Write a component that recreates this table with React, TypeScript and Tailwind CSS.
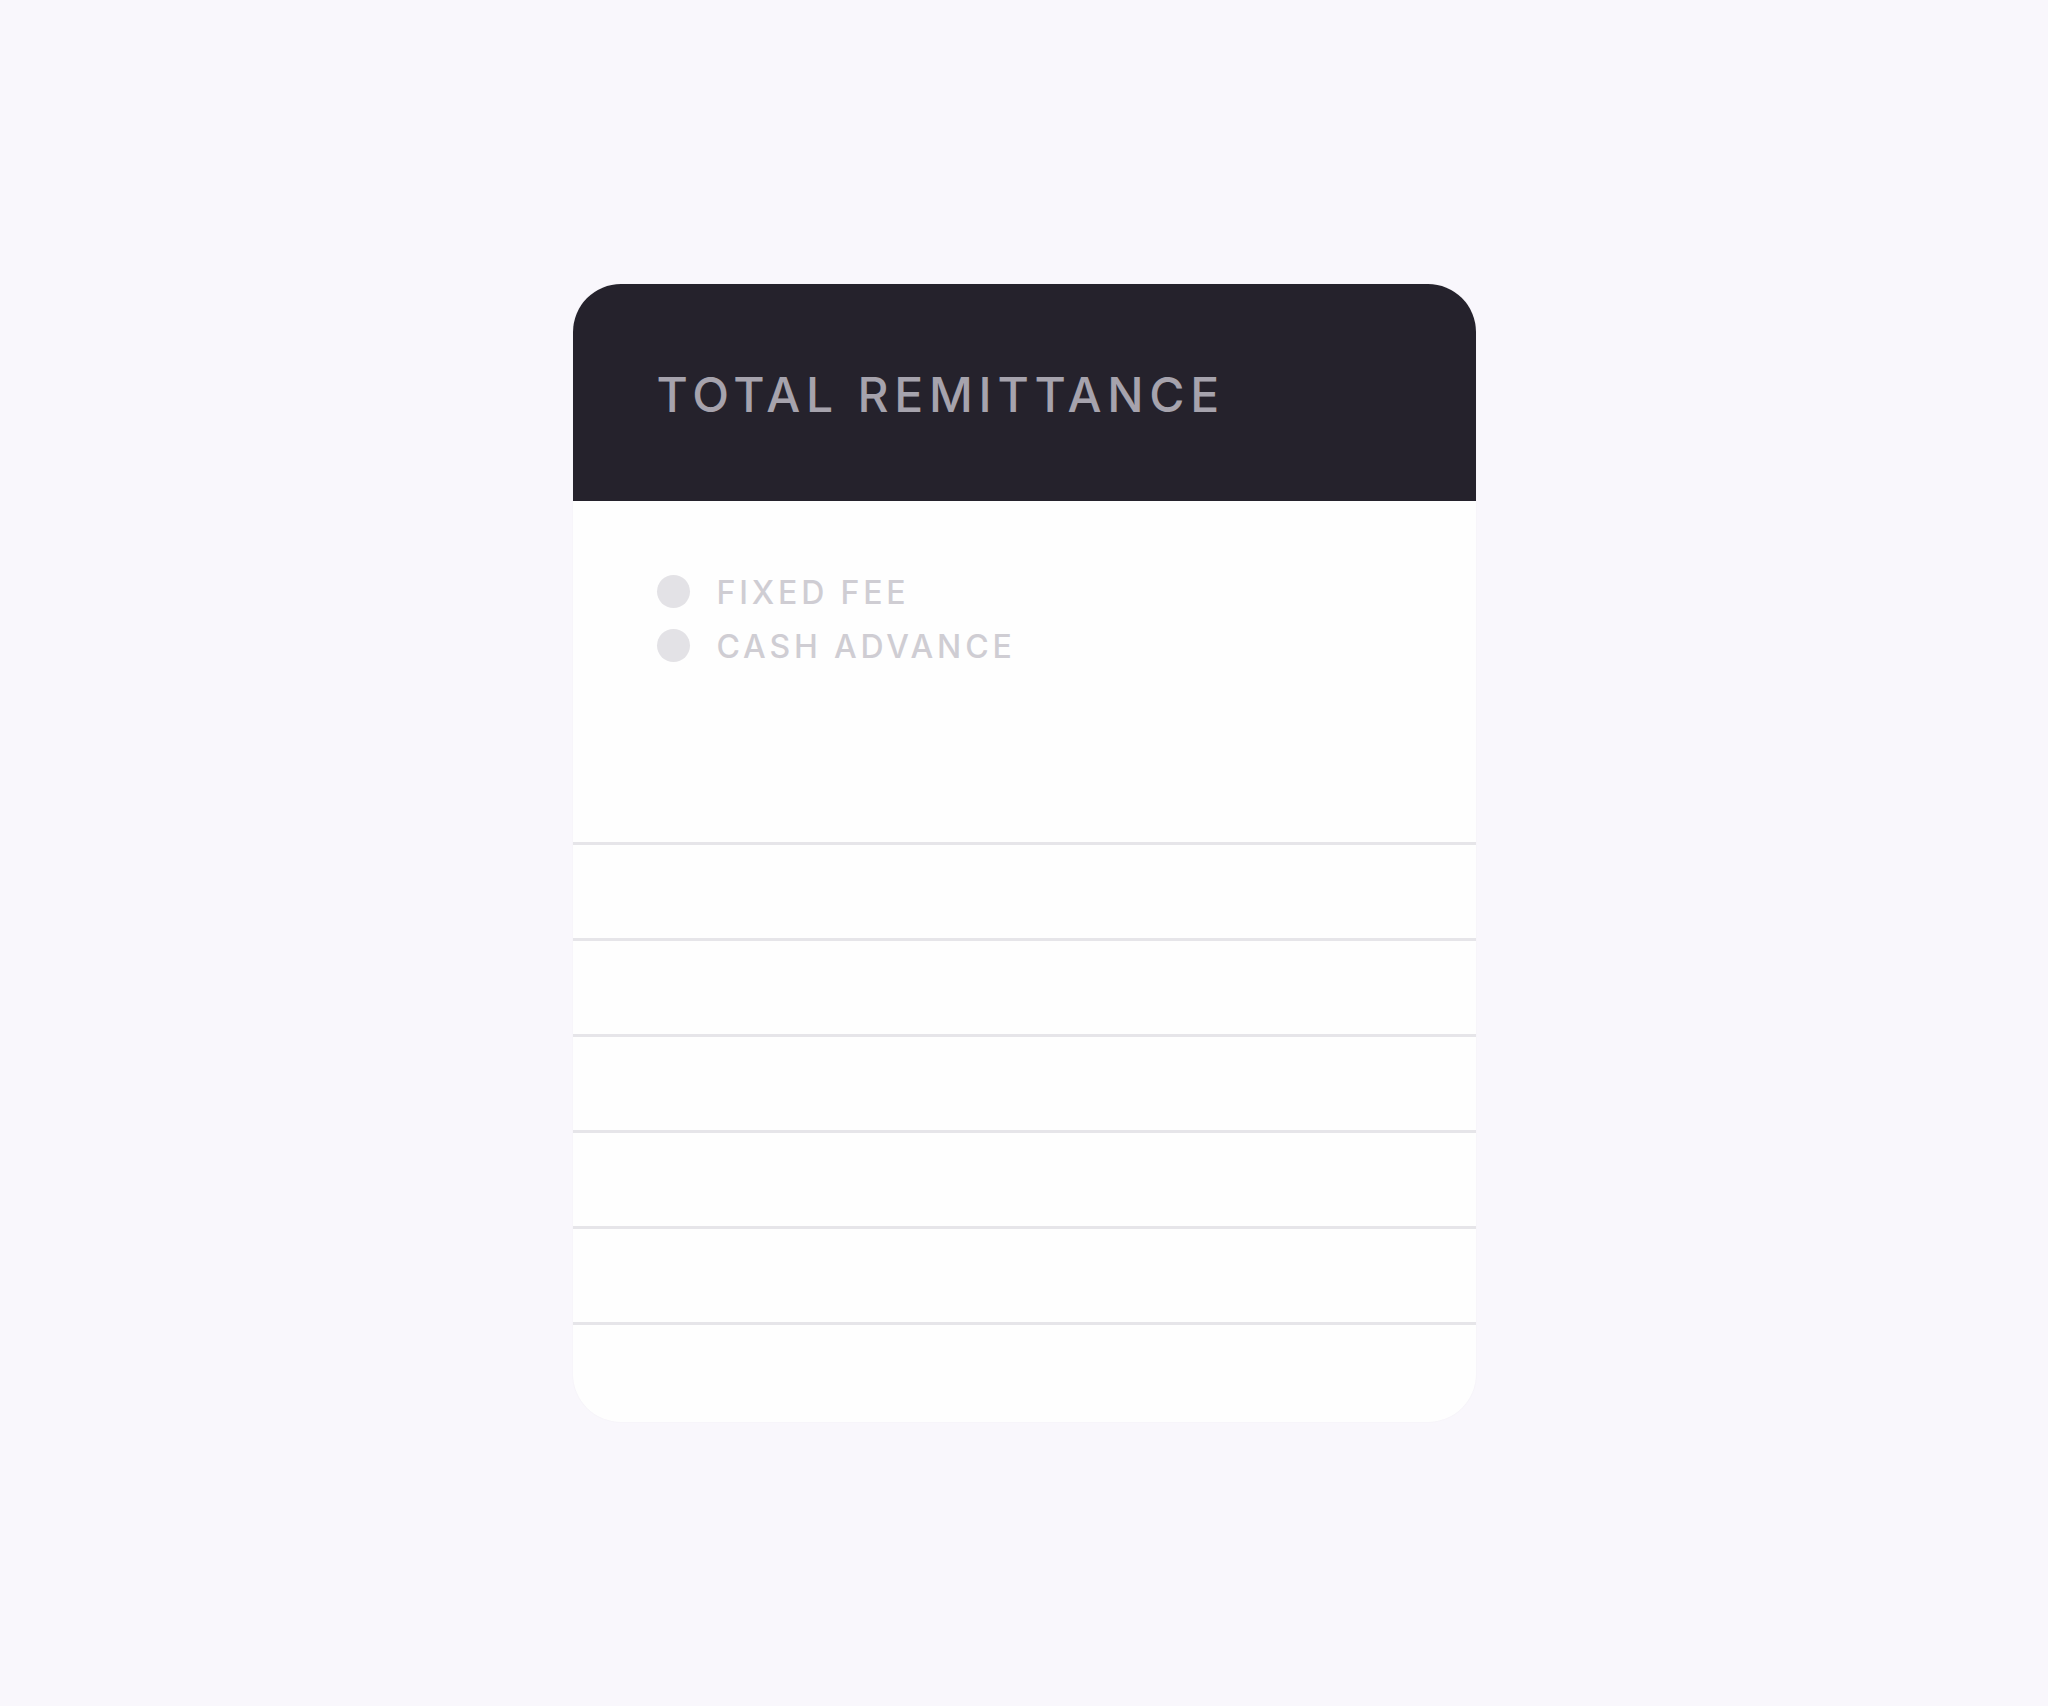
import React from 'react';

const legend = [
  { label: 'FIXED FEE' },
  { label: 'CASH ADVANCE' },
];

const rows = [0, 1, 2, 3, 4];

const App: React.FC = () => {
  return (
    <div
      className="flex h-[1706px] w-full items-center justify-center bg-[#f9f7fc]"
      style={{ fontFamily: 'Inter, "Noto Sans", sans-serif' }}
    >
      <div className="flex w-[903px] flex-col overflow-hidden rounded-[48px] bg-[#fefefe] shadow-[0_0_2px_rgba(40,30,60,0.04)]">
        <div className="flex h-[217px] items-center bg-[#25222c] pl-[84px] pt-[4px]">
          <h2 className="text-[48px] font-medium leading-none tracking-[0.12em] text-[#a6a3ad]">
            TOTAL REMITTANCE
          </h2>
        </div>

        <div className="h-[341px] pl-[84px] pt-[73px]">
          <div className="flex flex-col gap-[19px]">
            {legend.map((item) => (
              <div key={item.label} className="flex items-center gap-[27px]">
                <span className="h-[33px] w-[33px] rounded-full bg-[#e3e2e6]" />
                <span className="pt-[3px] text-[32px] font-medium leading-none tracking-[0.12em] text-[#cfcdd3]">
                  {item.label}
                </span>
              </div>
            ))}
          </div>
        </div>

        {rows.map((r) => (
          <div key={r} className="h-[96px] border-t-[3px] border-[#e6e5e9]" />
        ))}
        <div className="h-[100px] border-t-[3px] border-[#e6e5e9]" />
      </div>
    </div>
  );
};

export default App;
